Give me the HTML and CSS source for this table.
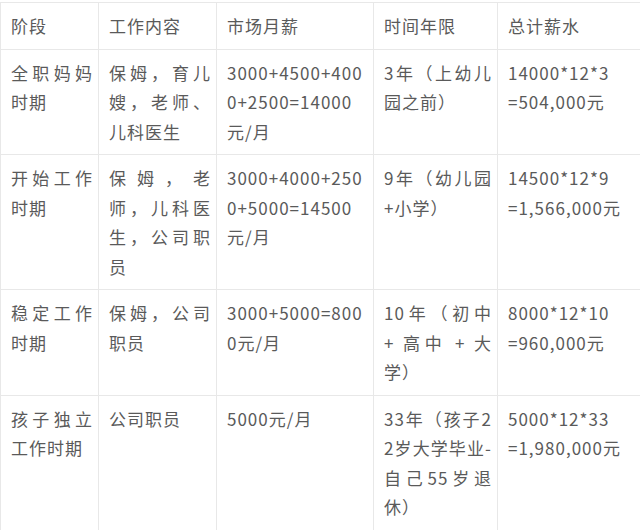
FILE: index.html
```html
<!DOCTYPE html>
<html lang="zh-CN">
<head>
<meta charset="utf-8">
<link rel="stylesheet" href="styles.css">
</head>
<body>
<table class="salary">
  <colgroup>
    <col class="c1"><col class="c2"><col class="c3"><col class="c4"><col class="c5">
  </colgroup>
  <tr>
    <td>阶段</td><td>工作内容</td><td>市场月薪</td><td>时间年限</td><td>总计薪水</td>
  </tr>
  <tr>
    <td>全职妈妈时期</td>
    <td>保姆，育儿嫂，老师、儿科医生</td>
    <td>3000+4500+4000+2500=14000元/月</td>
    <td>3年（上幼儿园之前）</td>
    <td>14000*12*3<br>=504,000元</td>
  </tr>
  <tr>
    <td>开始工作时期</td>
    <td>保姆，老师，儿科医生，公司职员</td>
    <td>3000+4000+2500+5000=14500元/月</td>
    <td>9年（幼儿园+小学）</td>
    <td>14500*12*9<br>=1,566,000元</td>
  </tr>
  <tr>
    <td>稳定工作时期</td>
    <td>保姆，公司职员</td>
    <td>3000+5000=8000元/月</td>
    <td>10年（初中 + 高中 + 大学）</td>
    <td>8000*12*10<br>=960,000元</td>
  </tr>
  <tr>
    <td>孩子独立工作时期</td>
    <td>公司职员</td>
    <td>5000元/月</td>
    <td>33年（孩子22岁大学毕业-自己55岁退休）</td>
    <td>5000*12*33<br>=1,980,000元</td>
  </tr>
</table>
</body>
</html>
```

FILE: styles.css
```css
html, body {
  margin: 0;
  padding: 0;
  background: #ffffff;
}

body {
  padding-top: 2px;
}

.salary {
  border-collapse: collapse;
  table-layout: fixed;
  width: 641px;
  font-family: "Noto Sans CJK SC", "Noto Sans", sans-serif;
  font-size: 17px;
  letter-spacing: 1px;
  line-height: 29.5px;
  color: #5a5a5a;
}

.c1 { width: 98px; }
.c2 { width: 118px; }
.c3 { width: 157px; }
.c4 { width: 124px; }
.c5 { width: 144px; }

.salary td {
  border: 1px solid #e8e8e8;
  padding: 8px 5px 8px 10px;
  vertical-align: top;
  text-align: justify;
  word-break: break-all;
}
```
